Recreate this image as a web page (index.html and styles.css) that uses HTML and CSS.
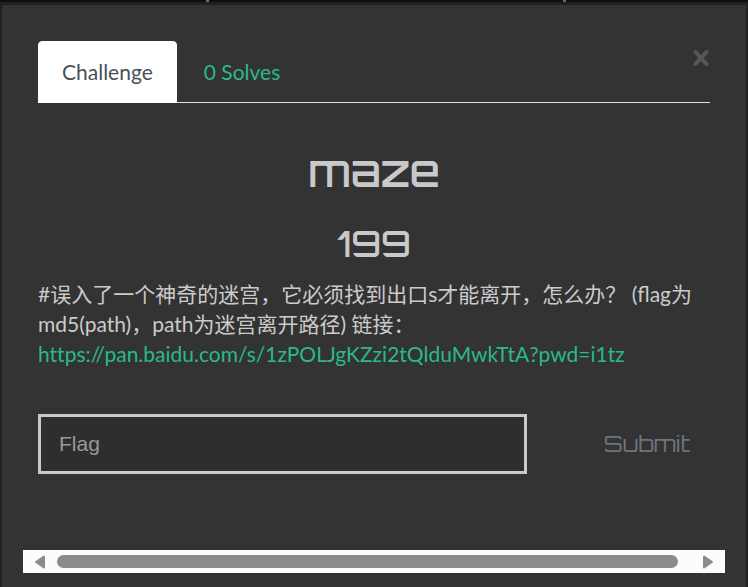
FILE: index.html
```html
<!DOCTYPE html>
<html lang="zh-CN">
<head>
<meta charset="utf-8">
<meta name="viewport" content="width=device-width, initial-scale=1">
<title>maze</title>
<link rel="stylesheet" href="styles.css">
</head>
<body>
<div class="backdrop"><span class="tick"></span><span class="tick"></span></div>
<main class="modal">
  <div class="content">
    <button class="close" type="button" aria-label="Close">
      <svg viewBox="0 0 16 18" width="16" height="18"><path d="M2.5 3 13.5 15M13.5 3 2.5 15"/></svg>
    </button>
    <nav class="tabs">
      <a class="tab active" href="#challenge">Challenge</a>
      <a class="tab" href="#solves">0 Solves</a>
    </nav>
    <h2 class="name">maze</h2>
    <h3 class="value">199</h3>
    <p class="description">#误入了一个神奇的迷宫，它必须找到出口s才能离开，怎么办？ (flag为md5(path)，path为迷宫离开路径) 链接：<br><a href="https://pan.baidu.com/s/1zPOLJgKZzi2tQlduMwkTtA?pwd=i1tz">https://pan.baidu.com/s/1zPOLJgKZzi2tQlduMwkTtA?pwd=i1tz</a></p>
    <form class="answer">
      <input class="flag" type="text" placeholder="Flag" aria-label="Flag">
      <button class="submit" type="button">Submit</button>
    </form>
  </div>
  <div class="scrollbar">
    <button class="arrow" type="button" aria-label="Scroll left"><svg viewBox="0 0 12 16" width="12" height="16"><path d="M10 2.5v11L2 8z"/></svg></button>
    <div class="thumb"></div>
    <button class="arrow" type="button" aria-label="Scroll right"><svg viewBox="0 0 12 16" width="12" height="16"><path d="M2 2.5v11L10 8z"/></svg></button>
  </div>
</main>
</body>
</html>
```
FILE: styles.css
```css
* { box-sizing: border-box; }

body {
  margin: 0;
  min-height: 100vh;
  display: flex;
  flex-direction: column;
  background: #1f2022;
  color: #cbcbcb;
  font: 21px/30px Lato, "Noto Sans CJK SC", sans-serif;
}

a { color: #2ab98a; text-decoration: none; }

button { padding: 0; border: 0; background: none; }

.backdrop {
  display: flex;
  justify-content: space-between;
  height: 2px;
  margin-bottom: 3px;
  padding: 0 182px 0 206px;
  background: #0d0e10;
}

.tick { width: 3px; background: #66686a; }

.modal {
  flex: 1;
  margin: 0 2px;
  padding: 36px 21px 14px;
  background: #333;
}

.content { position: relative; padding: 0 15px; }

.close {
  position: absolute;
  top: 8px;
  right: 16px;
  line-height: 0;
}

.close path {
  fill: none;
  stroke: #575757;
  stroke-width: 4;
  stroke-linecap: round;
}

.tabs { display: flex; border-bottom: 1px solid #dee2e6; }

.tab {
  margin-bottom: -1px;
  padding: 15px 23px;
  border: 1px solid transparent;
  border-radius: 4px 4px 0 0;
}

.tab + .tab { margin-left: 3px; }

.tab.active { border-color: #fff; background: #fff; color: #495057; }

.name, .value {
  margin: 0;
  color: #c9c9cb;
  font-family: Orbitron, "DejaVu Sans", sans-serif;
  font-weight: 500;
  text-align: center;
}

.name { padding-top: 38px; font-size: 44px; line-height: 60px; }

.value { padding-top: 18px; font-size: 36px; line-height: 50px; }

.description { margin: 10px 0 45px; overflow-wrap: anywhere; }

.description a { font-variant-ligatures: none; }

.answer { display: flex; align-items: center; gap: 57px; }

.flag {
  flex: 1;
  min-width: 0;
  height: 60px;
  padding: 0 18px;
  border: 3px solid #c9c9cb;
  border-radius: 0;
  outline: 0;
  background: #2e2e2e;
  color: #cbcbcb;
  font: 21px/30px "Liberation Sans", sans-serif;
}

.flag::placeholder { color: #999; opacity: 1; }

.submit {
  flex: 0 0 126px;
  color: #6c757d;
  font: 23px/30px Orbitron, "DejaVu Sans", sans-serif;
}

.scrollbar {
  display: flex;
  align-items: center;
  height: 23px;
  margin-top: 76px;
  padding: 0 11px;
  background: #fcfcfc;
}

.arrow { line-height: 0; }

.arrow path {
  fill: #8b8b8b;
  stroke: #8b8b8b;
  stroke-width: 2;
  stroke-linejoin: round;
}

.thumb {
  flex: 1;
  height: 13px;
  margin: 0 24px 0 11px;
  border-radius: 7px;
  background: #8b8b8b;
}
```
